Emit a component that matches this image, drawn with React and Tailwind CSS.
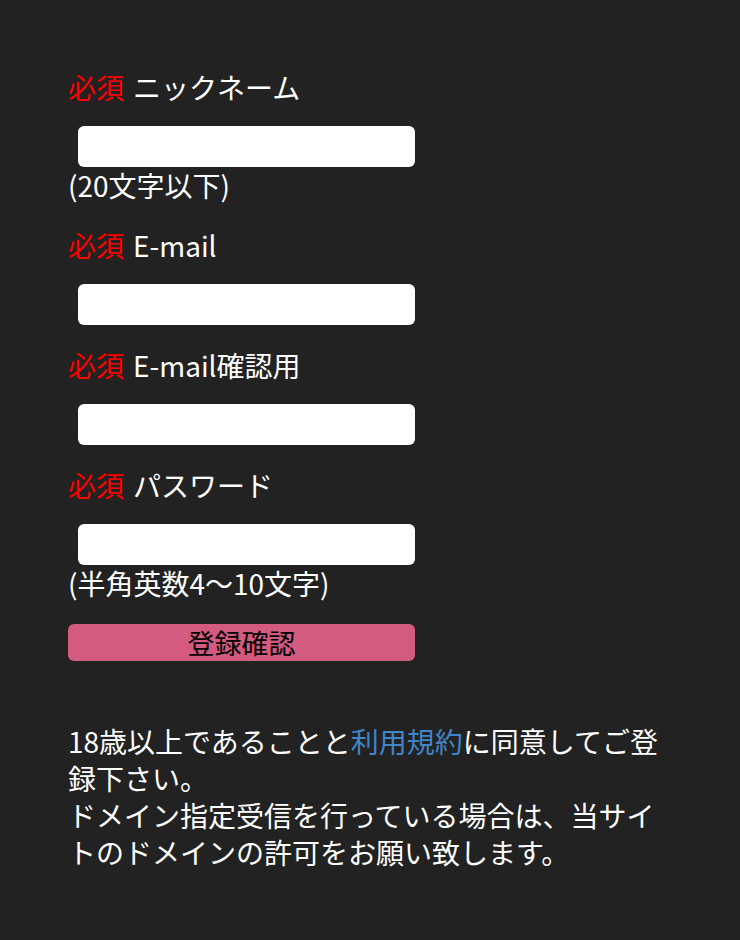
export default function App() {
  const Label = ({ children }) => (
    <div className="text-[28px] leading-[37px] text-white">
      <span className="text-[#ff0000]">必須</span>
      <span className="ml-[9px]">{children}</span>
    </div>
  );
  const Input = ({ type = "text" }) => (
    <input
      type={type}
      className="block ml-[10px] w-[337px] h-[41px] rounded-[6px] bg-white border-0 outline-none"
    />
  );
  return (
    <div className="min-h-[940px] bg-[#222222] px-[68px] pt-[69px] pb-[60px] text-white [font-family:'Noto_Sans_CJK_JP','Noto_Sans',sans-serif]">
      <form className="flex flex-col" onSubmit={(e) => e.preventDefault()}>
        <Label>ニックネーム</Label>
        <div className="mt-[20px]">
          <Input />
        </div>
        <div className="text-[28px] leading-[37px]">(20文字以下)</div>

        <div className="mt-[23px]">
          <Label>E-mail</Label>
        </div>
        <div className="mt-[20px]">
          <Input type="email" />
        </div>

        <div className="mt-[22px]">
          <Label>E-mail確認用</Label>
        </div>
        <div className="mt-[20px]">
          <Input type="email" />
        </div>

        <div className="mt-[22px]">
          <Label>パスワード</Label>
        </div>
        <div className="mt-[20px]">
          <Input type="password" />
        </div>
        <div className="text-[28px] leading-[37px]">(半角英数4〜10文字)</div>

        <button
          type="submit"
          className="mt-[22px] w-[347px] h-[37px] rounded-[6px] bg-[#d55a80] text-black text-[27px] leading-[37px]"
        >
          登録確認
        </button>
      </form>

      <p className="mt-[62px] text-[28px] leading-[37px] text-white">
        18歳以上であることと<span className="text-[#3f86c8]">利用規約</span>に同意してご登録下さい。
        <br />
        ドメイン指定受信を行っている場合は、当サイトのドメインの許可をお願い致します。
      </p>
    </div>
  );
}
